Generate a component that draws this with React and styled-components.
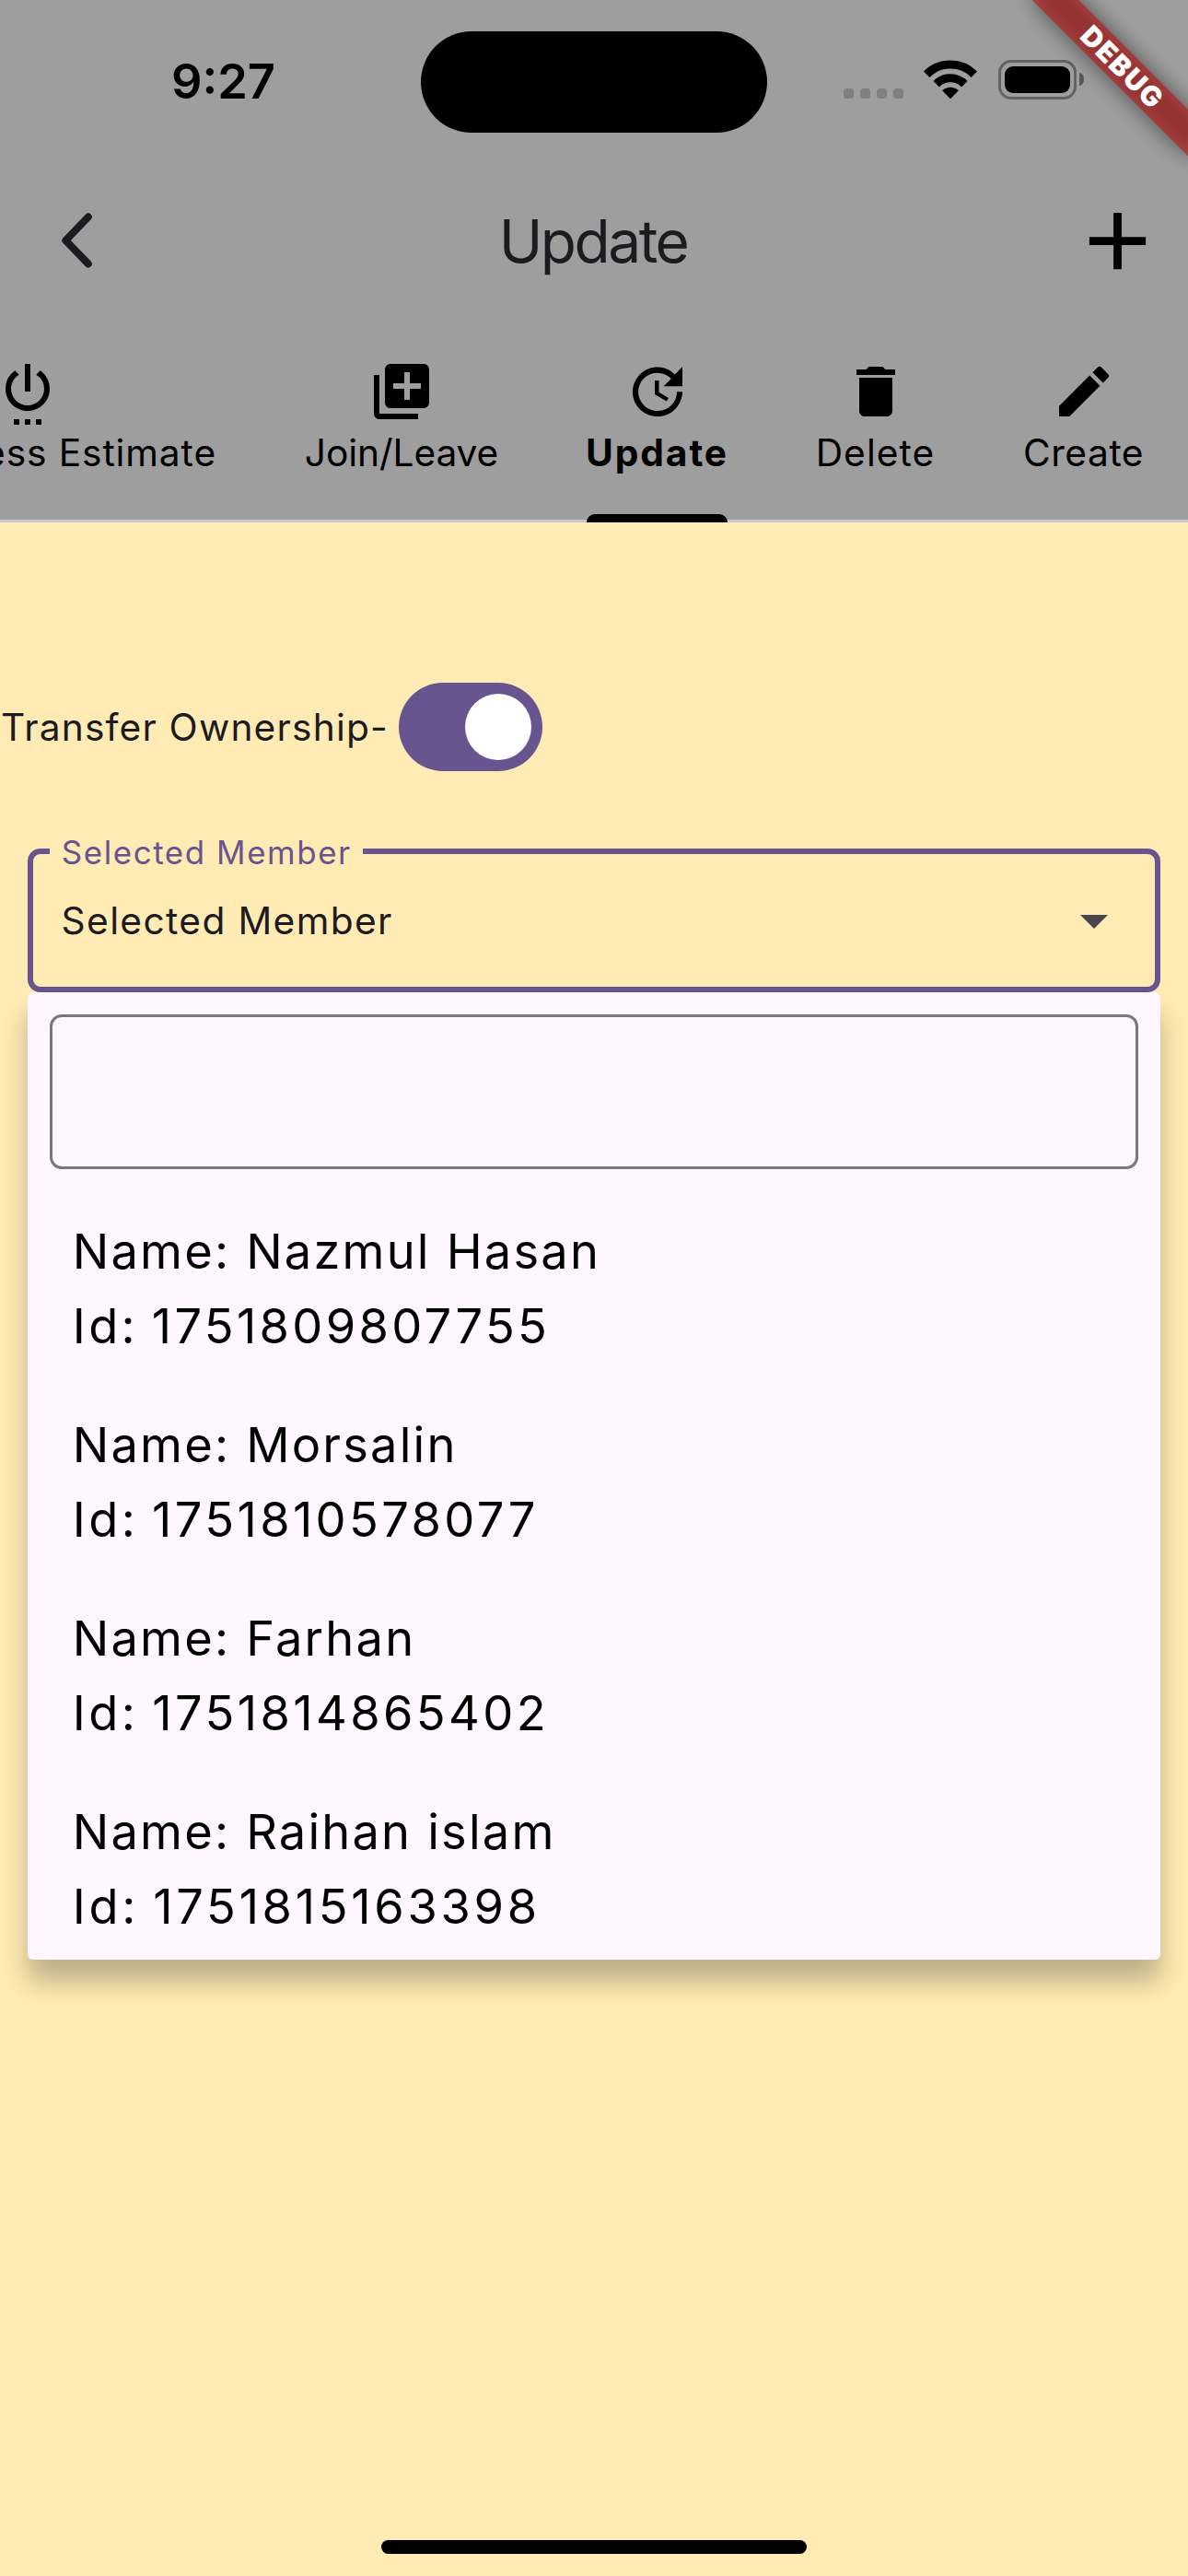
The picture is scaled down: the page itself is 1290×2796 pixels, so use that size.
import React from 'react';
import styled, { createGlobalStyle } from 'styled-components';
import {
  MdAdd,
  MdArrowDropDown,
  MdCreate,
  MdDelete,
  MdLibraryAdd,
  MdSettingsPower,
  MdUpdate,
} from 'react-icons/md';

const color = {
  header: '#9e9e9e',
  body: '#ffebb3',
  primary: '#68548e',
  onSurface: '#1d1b20',
  surface: '#fef7ff',
};

const GlobalStyle = createGlobalStyle`
  *, *::before { box-sizing: border-box; }
  body {
    margin: 0;
    background: ${color.body};
    font-family: Inter, "Liberation Sans", sans-serif;
    color: #000;
  }
  svg { display: block; flex: none; }
`;

const Screen = styled.div`
  position: relative;
  display: flex;
  flex-direction: column;
  width: 1290px;
  height: 2796px;
  overflow: hidden;
  background: ${color.body};
`;

const Header = styled.header`
  background: ${color.header};
`;

const StatusBar = styled.div`
  display: grid;
  grid-template-columns: 457px 376px 1fr;
  align-items: start;
  height: 177px;
`;

const Clock = styled.div`
  padding: 58px 0 0 186px;
  font-size: 52.4px;
  font-weight: 600;
  line-height: 60px;
`;

const Island = styled.div`
  height: 110px;
  margin-top: 34px;
  border-radius: 55px;
  background: #000;
`;

const StatusIcons = styled.div`
  display: flex;
  align-items: flex-end;
  padding: 65px 0 0 83px;
`;

const Dots = styled.div`
  display: flex;
  gap: 7px;
  margin: 0 22px 1px 0;
`;

const Dot = styled.span`
  width: 11px;
  height: 11px;
  border-radius: 3.5px;
  background: #808080;
`;

const BatteryBody = styled.div`
  width: 85px;
  height: 43px;
  margin-left: 23px;
  padding: 3.5px;
  border: 3.5px solid #636363;
  border-radius: 14px;
`;

const BatteryLevel = styled.div`
  height: 29px;
  width: 71px;
  border-radius: 9px;
  background: #000;
`;

const BatteryTip = styled.div`
  width: 5px;
  height: 14px;
  margin: 0 0 15px 3px;
  border-radius: 0 5px 5px 0 / 0 7px 7px 0;
  background: #585858;
`;

const Toolbar = styled.div`
  display: grid;
  grid-template-columns: 1fr auto 1fr;
  align-items: center;
  height: 168px;
  padding: 0 24px 0 60px;
  color: ${color.onSurface};
`;

const Title = styled.h1`
  margin: 0;
  padding-top: 2px;
  font-size: 64px;
  font-weight: 400;
  line-height: 84px;
  letter-spacing: -2.5px;
  transform: translateX(-19px);
`;

const AddButton = styled.div`
  justify-self: end;
  color: #000;
`;

const Tabs = styled.nav`
  display: flex;
  justify-content: flex-end;
  gap: 96px;
  height: 222px;
  padding-right: 48px;
  overflow: hidden;
  box-shadow: inset 0 -3px #cac4d0;
`;

const Tab = styled.div`
  display: flex;
  flex: none;
  flex-direction: column;
  align-items: center;
  width: ${(p) => p.$width}px;
  padding-top: 44px;
`;

const TabLabel = styled.span`
  align-self: ${(p) => (p.$clipped ? 'flex-end' : 'center')};
  padding-top: 1px;
  font-size: 40.7px;
  font-weight: ${(p) => (p.$active ? 700 : 400)};
  line-height: 60px;
  letter-spacing: ${(p) => p.$tracking}px;
  white-space: nowrap;
`;

const Indicator = styled.div`
  align-self: stretch;
  height: 9px;
  margin-top: auto;
  border-radius: 9px 9px 0 0;
  background: #000;
`;

const Content = styled.main`
  flex: 1;
  padding-top: 174px;
`;

const SwitchRow = styled.div`
  display: flex;
  align-items: center;
  height: 96px;
  padding-left: 1px;
  color: ${color.onSurface};
`;

const SwitchLabel = styled.span`
  width: 432px;
  padding-top: 2px;
  font-size: 40.7px;
  line-height: 60px;
  letter-spacing: 1.18px;
  white-space: nowrap;
`;

const Switch = styled.div`
  display: flex;
  justify-content: flex-end;
  width: 156px;
  height: 96px;
  padding: 12px;
  border-radius: 48px;
  background: ${color.primary};
`;

const Thumb = styled.div`
  width: 72px;
  height: 72px;
  border-radius: 50%;
  background: #fff;
`;

const Field = styled.fieldset`
  height: 178px;
  margin: 62px 30px 0;
  padding: 0 30px 0 18px;
  border: 6px solid ${color.primary};
  border-radius: 14px;
`;

const FieldLabel = styled.legend`
  width: 340px;
  height: 50px;
  padding: 1px 0 0 12.8px;
  color: ${color.primary};
  font-size: 34.9px;
  line-height: 50px;
  letter-spacing: 1.58px;
  white-space: nowrap;
`;

const FieldValue = styled.div`
  display: flex;
  align-items: center;
  justify-content: space-between;
  height: 100px;
  padding-left: 12.6px;
  color: ${color.onSurface};
  font-size: 40.7px;
  letter-spacing: 1.36px;

  svg { color: #49454f; }
`;

const Menu = styled.div`
  height: 1050px;
  margin: 0 30px;
  padding: 24px;
  overflow: hidden;
  border-radius: 6px;
  background: ${color.surface};
  box-shadow: 0 24px 28px rgba(0, 0, 0, 0.25);
`;

const SearchBox = styled.div`
  height: 168px;
  margin-bottom: 25px;
  border: 3px solid #7a757f;
  border-radius: 13px;
`;

const Member = styled.div`
  padding: 24px 24.8px;
  font-size: 52.4px;
  line-height: 81px;
`;

const MemberLine = styled.div`
  letter-spacing: ${(p) => p.$tracking}px;
  word-spacing: ${(p) => p.$wordGap || 0}px;
  white-space: nowrap;
`;

const HomeIndicator = styled.div`
  width: 462px;
  height: 15px;
  margin: 0 auto 24px;
  border-radius: 8px;
  background: #000;
`;

const Banner = styled.div`
  position: absolute;
  top: 54px;
  left: 1098px;
  width: 240px;
  height: 36px;
  transform: rotate(45deg);

  &::before {
    content: '';
    position: absolute;
    inset: 0;
    background: rgba(0, 0, 0, 0.5);
    filter: blur(12px);
  }
`;

const BannerText = styled.div`
  position: relative;
  height: 36px;
  padding-left: 3px;
  background: rgba(183, 28, 28, 0.63);
  color: #fff;
  font-size: 30.2px;
  font-weight: 900;
  line-height: 36px;
  letter-spacing: 1.6px;
  text-align: center;
`;

const WifiIcon = () => (
  <svg width="58" height="43" viewBox="0 0 58 43">
    <g fill="none" stroke="#000" strokeWidth="9">
      <path d="M3.2 15.7a36.5 36.5 0 0 1 51.6 0" />
      <path d="M13.7 26.2a21.6 21.6 0 0 1 30.6 0" />
    </g>
    <path d="M29 42.3l-8.8-9a12.6 12.6 0 0 1 17.6 0z" />
  </svg>
);

const BackIcon = () => (
  <svg width="48" height="72" viewBox="0 0 48 72">
    <path
      d="M35.8 10.4L11.3 36l24.5 25.4"
      fill="none"
      stroke="currentColor"
      strokeWidth="8"
      strokeLinecap="round"
      strokeLinejoin="round"
    />
  </svg>
);

const tabs = [
  { label: 'ess Estimate', Icon: MdSettingsPower, width: 411, tracking: 0.88, clipped: true },
  { label: 'Join/Leave', Icon: MdLibraryAdd, width: 210, tracking: -0.1 },
  { label: 'Update', Icon: MdUpdate, width: 153, tracking: 1.9, active: true },
  { label: 'Delete', Icon: MdDelete, width: 129, tracking: 1.05 },
  { label: 'Create', Icon: MdCreate, width: 131, tracking: 0.55 },
];

const members = [
  { name: 'Nazmul Hasan', id: '1751809807755', tracking: 3.3 },
  { name: 'Morsalin', id: '1751810578077', tracking: 3.37 },
  { name: 'Farhan', id: '1751814865402', tracking: 3.4 },
  { name: 'Raihan islam', id: '1751815163398', tracking: 3.68 },
];

export default function App() {
  return (
    <>
      <GlobalStyle />
      <Screen>
        <Header>
          <StatusBar>
            <Clock>9:27</Clock>
            <Island />
            <StatusIcons>
              <Dots>
                <Dot />
                <Dot />
                <Dot />
                <Dot />
              </Dots>
              <WifiIcon />
              <BatteryBody>
                <BatteryLevel />
              </BatteryBody>
              <BatteryTip />
            </StatusIcons>
          </StatusBar>
          <Toolbar>
            <BackIcon />
            <Title>Update</Title>
            <AddButton>
              <MdAdd size={105} />
            </AddButton>
          </Toolbar>
          <Tabs>
            {tabs.map(({ label, Icon, width, tracking, active, clipped }) => (
              <Tab key={label} $width={width}>
                <Icon size={72} />
                <TabLabel $active={active} $tracking={tracking} $clipped={clipped}>
                  {label}
                </TabLabel>
                {active && <Indicator />}
              </Tab>
            ))}
          </Tabs>
        </Header>
        <Content>
          <SwitchRow>
            <SwitchLabel>Transfer Ownership-</SwitchLabel>
            <Switch>
              <Thumb />
            </Switch>
          </SwitchRow>
          <Field>
            <FieldLabel>Selected Member</FieldLabel>
            <FieldValue>
              Selected Member
              <MdArrowDropDown size={72} />
            </FieldValue>
          </Field>
          <Menu>
            <SearchBox />
            {members.map((m) => (
              <Member key={m.id}>
                <MemberLine $tracking={2.2}>Name: {m.name}</MemberLine>
                <MemberLine $tracking={m.tracking} $wordGap={-3.2}>
                  Id: {m.id}
                </MemberLine>
              </Member>
            ))}
          </Menu>
        </Content>
        <HomeIndicator />
        <Banner>
          <BannerText>DEBUG</BannerText>
        </Banner>
      </Screen>
    </>
  );
}
